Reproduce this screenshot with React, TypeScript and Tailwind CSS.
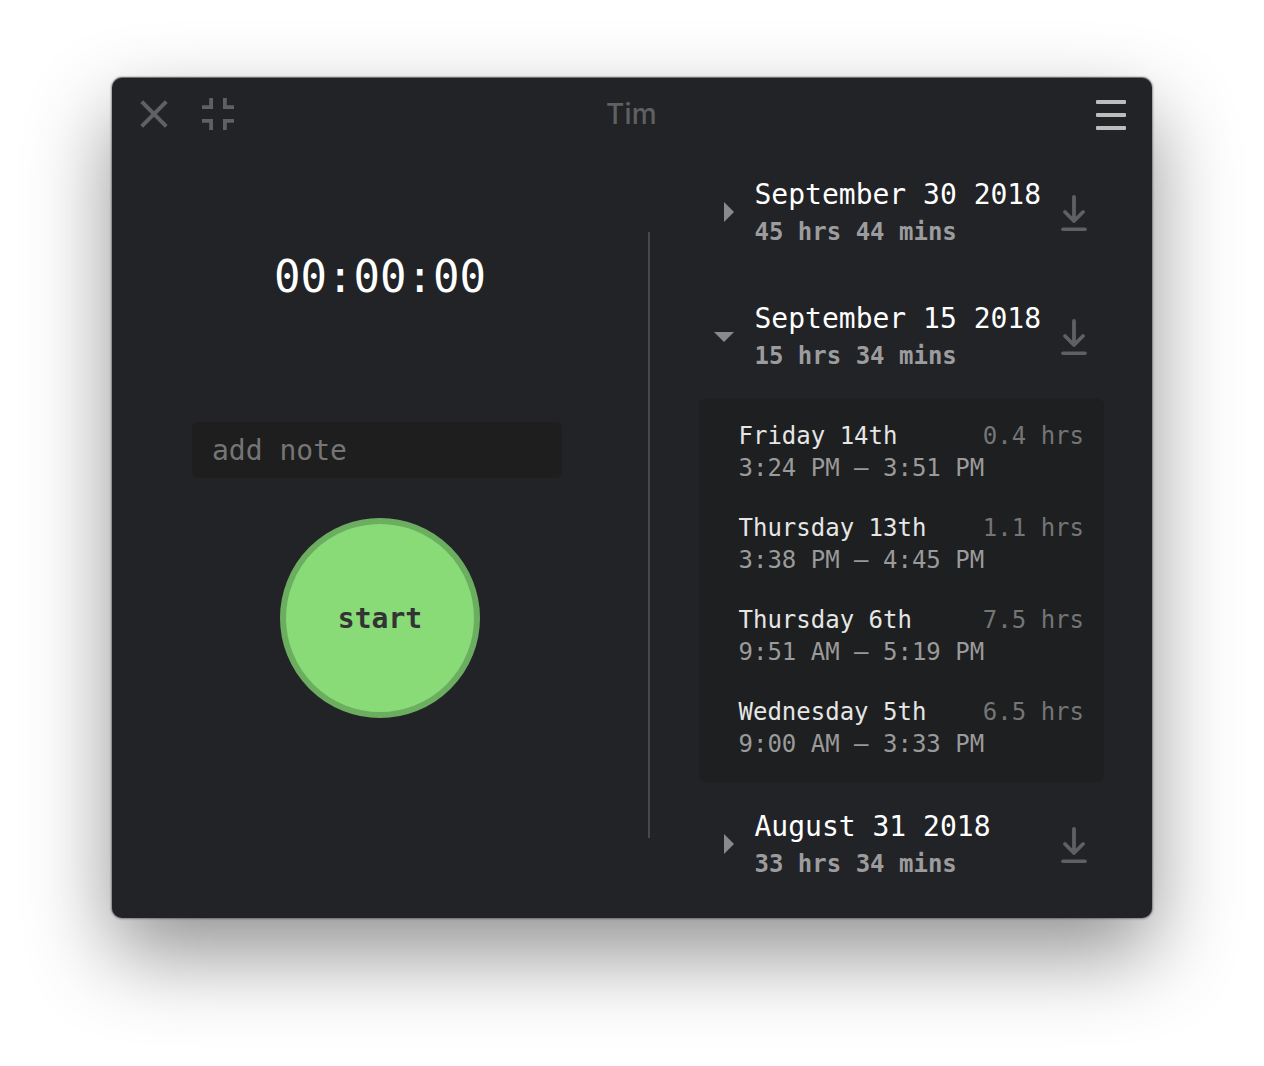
import React from "react";

type Session = { day: string; hours: string; range: string };
type Period = { title: string; total: string; sessions?: Session[] };

const periods: Period[] = [
  { title: "September 30 2018", total: "45 hrs 44 mins" },
  {
    title: "September 15 2018",
    total: "15 hrs 34 mins",
    sessions: [
      { day: "Friday 14th", hours: "0.4 hrs", range: "3:24 PM – 3:51 PM" },
      { day: "Thursday 13th", hours: "1.1 hrs", range: "3:38 PM – 4:45 PM" },
      { day: "Thursday 6th", hours: "7.5 hrs", range: "9:51 AM – 5:19 PM" },
      { day: "Wednesday 5th", hours: "6.5 hrs", range: "9:00 AM – 3:33 PM" },
    ],
  },
  { title: "August 31 2018", total: "33 hrs 34 mins" },
];

function DownloadIcon() {
  return (
    <svg width="28" height="38" viewBox="0 0 28 38" fill="none" stroke="#5f6062" strokeLinecap="round" strokeLinejoin="round">
      <path d="M14 3V27M5 18L14 27L23 18" strokeWidth="3.8" />
      <path d="M2.9 35.3H25.1" strokeWidth="3.4" />
    </svg>
  );
}

function PeriodRow({ period }: { period: Period }) {
  const open = Boolean(period.sessions);
  return (
    <div className="flex h-[76px] w-[405px] pl-[15px]">
      <div className="flex w-[40.5px] shrink-0 pt-[28px]">
        {open ? (
          <svg className="mt-[6px]" width="20" height="10" viewBox="0 0 20 10">
            <path d="M0 0H20L10 10Z" fill="#8a8a8b" />
          </svg>
        ) : (
          <svg className="ml-[10px]" width="10" height="20" viewBox="0 0 10 20">
            <path d="M0 0L10 10L0 20Z" fill="#8a8a8b" />
          </svg>
        )}
      </div>
      <div className="w-[305.5px] shrink-0 pt-px whitespace-nowrap">
        <div className="h-[40px] text-[28px] leading-[40px] text-white">{period.title}</div>
        <div className="text-[24px] leading-[34px] font-bold text-[#9c9c9e]">{period.total}</div>
      </div>
      <div className="pt-[20px]">
        <DownloadIcon />
      </div>
    </div>
  );
}

export default function App() {
  return (
    <div className="h-[1066px] w-[1264px] overflow-hidden bg-white pt-[78px] pl-[112px] font-['DejaVu_Sans_Mono','Liberation_Mono',monospace]">
      <div className="flex h-[840px] w-[1040px] flex-col overflow-hidden rounded-[10px] bg-[#222327] shadow-[0_-1px_1px_0_rgba(0,0,0,0.4),0_0_2px_1px_rgba(0,0,0,0.35),0_36px_84px_rgba(0,0,0,0.43)]">
        <header className="flex h-[74px] shrink-0 items-center justify-between pr-[26px] pl-[28px]">
          <div className="flex w-[120px] items-center gap-[34px] pb-[2px]">
            <svg width="28" height="28" viewBox="0 0 28 28" stroke="#5f6062" strokeWidth="4">
              <path d="M1.7 1.7L26.3 26.3M26.3 1.7L1.7 26.3" />
            </svg>
            <svg width="32" height="32" viewBox="0 0 32 32" fill="none" stroke="#5f6062" strokeWidth="3.8">
              <path d="M0 9.1H9.1V0M22.9 0V9.1H32M0 22.9H9.1V32M22.9 32V22.9H32" />
            </svg>
          </div>
          <div className="pr-[3px] pb-[2px] font-['Inter',sans-serif] text-[28px] font-medium tracking-[0.3px] text-[#5f6062]">Tim</div>
          <div className="flex w-[120px] justify-end">
            <div className="flex w-[30px] flex-col gap-[9px]">
              <div className="h-1 rounded-[1px] bg-[#bdbdbe]" />
              <div className="h-1 rounded-[1px] bg-[#bdbdbe]" />
              <div className="h-1 rounded-[1px] bg-[#bdbdbe]" />
            </div>
          </div>
        </header>
        <main className="flex flex-1">
          <section className="flex w-[536px] flex-col items-center">
            <div className="mt-[95px] h-[60px] text-[44px] leading-[60px] text-white">00:00:00</div>
            <input
              className="mt-[115px] mr-[7px] h-[56px] w-[370px] rounded-[6px] bg-[#1e1e1e] pr-5 pl-[20.5px] text-[28px] text-white outline-none placeholder:text-[#757575]"
              placeholder="add note"
            />
            <button className="mt-10 h-[200px] w-[200px] rounded-full border-[6px] border-[#6cae60] bg-[#88db77] pt-[2px] text-[28px] font-bold text-[#333333]">
              start
            </button>
          </section>
          <div className="mt-[80px] h-[606px] w-[2px] bg-[#47484b]" />
          <section className="flex flex-col pt-[22px] pl-[49px]">
            {periods.map((period) => (
              <div key={period.title} className="mb-[48px]">
                <PeriodRow period={period} />
                {period.sessions && (
                  <div className="mt-[24px] mb-[-24px] flex h-[384px] w-[405px] flex-col gap-7 rounded-[8px] bg-[#1e1f20] pt-[22px] pr-5 pl-[39.5px] text-[24px] leading-[32px]">
                    {period.sessions.map((s) => (
                      <div key={s.day} className="whitespace-nowrap">
                        <div className="flex justify-between">
                          <span className="text-[#e6e6e6]">{s.day}</span>
                          <span className="text-[#757576]">{s.hours}</span>
                        </div>
                        <div className="text-[#9a9a9b]">{s.range}</div>
                      </div>
                    ))}
                  </div>
                )}
              </div>
            ))}
          </section>
        </main>
      </div>
    </div>
  );
}
